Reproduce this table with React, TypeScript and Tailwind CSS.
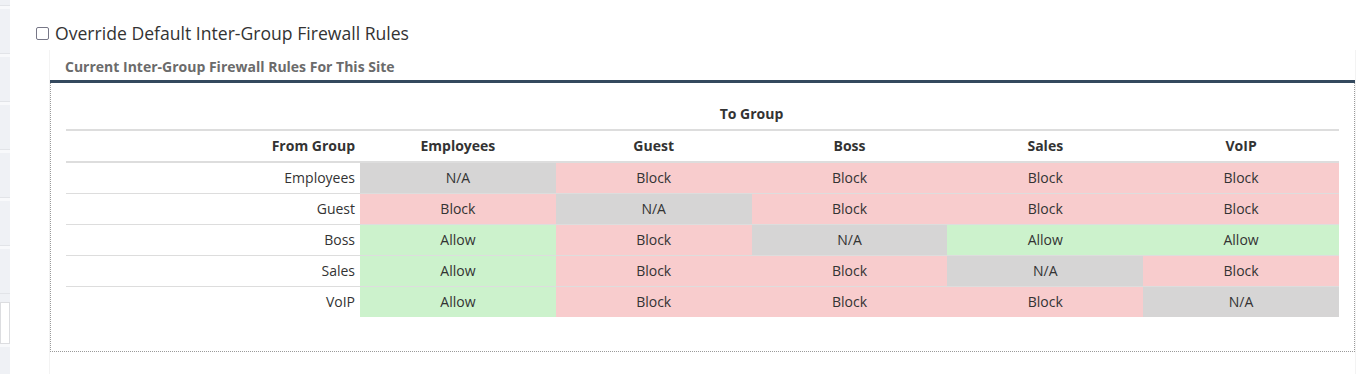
import React from "react";

type Rule = "N/A" | "Block" | "Allow";

const groups = ["Employees", "Guest", "Boss", "Sales", "VoIP"];

const matrix: Rule[][] = [
  ["N/A", "Block", "Block", "Block", "Block"],
  ["Block", "N/A", "Block", "Block", "Block"],
  ["Allow", "Block", "N/A", "Allow", "Allow"],
  ["Allow", "Block", "Block", "N/A", "Block"],
  ["Allow", "Block", "Block", "Block", "N/A"],
];

const ruleBg: Record<Rule, string> = {
  "N/A": "bg-[#d6d5d5]",
  Block: "bg-[#f8cccd]",
  Allow: "bg-[#ccf2cc]",
};

function SideStrip() {
  const items = [0, 1, 2, 3, 4, 5];
  return (
    <div className="flex w-[10px] shrink-0 flex-col bg-[#eff1f5]">
      <div className="h-[6px] border-b border-[#e2e4e8]" />
      {items.map((i) => (
        <div key={i} className="h-[48px] border-b border-[#e2e4e8] border-t-[3px] border-t-[#f8f9fb]" />
      ))}
      <div className="mt-[8px] h-[42px] border border-[#dcdde0] bg-white" />
      <div className="flex-1 border-t-[3px] border-t-[#f8f9fb]" />
    </div>
  );
}

export default function App() {
  return (
    <div className="flex h-[374px] w-[1367px] overflow-hidden bg-white font-['Open_Sans',sans-serif] text-[#333]">
      <SideStrip />
      <div className="flex flex-1 flex-col pl-[26px] pr-[11px]">
        <label className="mt-[19px] flex h-[28px] items-center gap-[6px] text-[17.6px] leading-[28px]">
          <span className="h-[13px] w-[13px] shrink-0 rounded-[2px] border border-[#777787] bg-white" />
          <span>Override Default Inter-Group Firewall Rules</span>
        </label>

        <div className="ml-[13px] mt-[3px] flex flex-1 flex-col border-x border-[#f3f3f3]">
          <div className="flex h-[30px] items-center pl-[15px] pt-[3px] text-[14px] font-bold text-[#6b6b6b]">
            Current Inter-Group Firewall Rules For This Site
          </div>
          <div className="h-[3px] bg-[#34495e]" />
          <div className="border-x border-b border-dotted border-[#9a9a9a] px-[15px] pb-[34px] pt-[16px]">
            <table className="w-full table-fixed border-collapse text-[14px] leading-[20px]">
              <colgroup>
                <col className="w-[294px]" />
                {groups.map((g) => (
                  <col key={g} />
                ))}
              </colgroup>
              <thead>
                <tr>
                  <th className="border-b-2 border-[#ddd] px-[5px] py-[5px]" />
                  <th colSpan={5} className="border-b-2 border-[#ddd] py-[5px] pl-[5px] pr-[201px] text-center font-bold">
                    To Group
                  </th>
                </tr>
                <tr>
                  <th className="border-b-2 border-[#ddd] px-[5px] py-[5px] text-right font-bold">From Group</th>
                  {groups.map((g) => (
                    <th key={g} className="border-b-2 border-[#ddd] px-[5px] py-[5px] text-center font-bold">
                      {g}
                    </th>
                  ))}
                </tr>
              </thead>
              <tbody>
                {groups.map((from, r) => (
                  <tr key={from}>
                    <td className="border-t border-[#ddd] px-[5px] py-[5px] text-right">{from}</td>
                    {matrix[r].map((rule, c) => (
                      <td
                        key={c}
                        className={`border-t border-[#ddd] px-[5px] py-[5px] text-center ${ruleBg[rule]}`}
                      >
                        {rule}
                      </td>
                    ))}
                  </tr>
                ))}
              </tbody>
            </table>
          </div>
        </div>
      </div>
    </div>
  );
}
